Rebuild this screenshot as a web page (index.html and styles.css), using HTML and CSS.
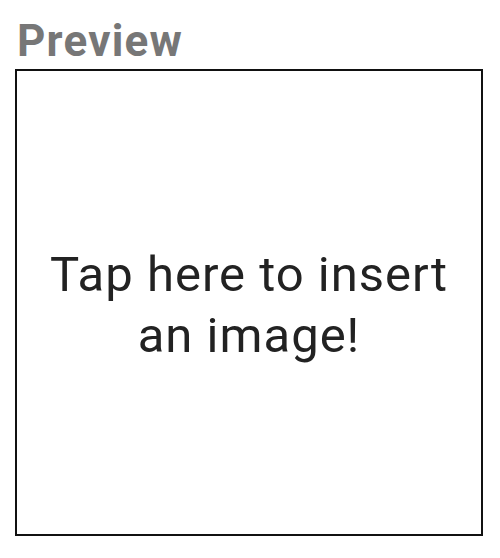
FILE: index.html
```html
<!DOCTYPE html>
<html>
<head>
<meta charset="utf-8">
<link rel="stylesheet" href="styles.css">
</head>
<body>
<div class="page">
  <h1 class="title">Preview</h1>
  <div class="preview-box">
    <p class="hint">Tap here to insert<br>an image!</p>
  </div>
</div>
</body>
</html>
```

FILE: styles.css
```css
html, body {
  margin: 0;
  padding: 0;
  background: #ffffff;
}
.page {
  width: 500px;
  height: 558px;
  padding: 14px 17px 0 15px;
  box-sizing: border-box;
  display: flex;
  flex-direction: column;
  font-family: Roboto, "Noto Sans", sans-serif;
}
.title {
  margin: 0 0 0 2px;
  font-size: 44px;
  font-weight: 700;
  line-height: 55px;
  letter-spacing: 1.2px;
  color: #777777;
}
.preview-box {
  width: 468px;
  height: 467px;
  box-sizing: border-box;
  border: 2px solid #111111;
  display: flex;
  align-items: center;
  justify-content: center;
}
.hint {
  margin: 0;
  padding-top: 5px;
  text-align: center;
  font-size: 49px;
  line-height: 61px;
  letter-spacing: 1px;
  color: #222222;
}
```
